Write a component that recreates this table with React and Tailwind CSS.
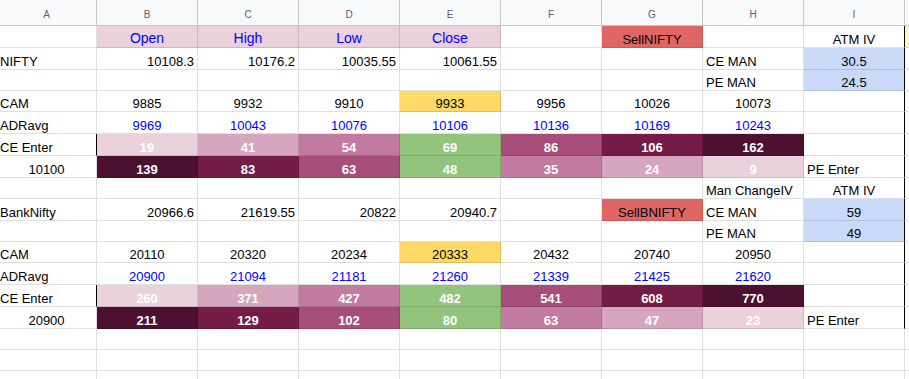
import React from "react";

const COLS = ["A", "B", "C", "D", "E", "F", "G", "H", "I"];

const HEAT = {
  1: "bg-[#ead1dc]",
  2: "bg-[#d5a6bd]",
  3: "bg-[#c27ba0]",
  4: "bg-[#93c47d]",
  5: "bg-[#a64d79]",
  6: "bg-[#741b47]",
  7: "bg-[#4c1130]",
};

// cell shorthand: text, alignment, extra classes
const t = (v, align = "l", extra = "") => ({ v, align, extra });
const blank = () => ({ v: "", align: "l", extra: "" });
const num = (v) => t(v, "r");
const mid = (v, extra = "") => t(v, "c", extra);
const blue = (v) => t(v, "c", "text-[#0000ff]");
const head = (v) => t(v, "c", "bg-[#ead1dc] text-[#0000ff] text-[14px] pb-[1px]");
const heat = (v, lvl) => t(v, "c", `${HEAT[lvl]} text-white font-bold`);
const atm = (v) => t(v, "c", "bg-[#c9daf8]");
const sell = (v) => t(v, "c", "bg-[#e06666]");

const empty = () => Array.from({ length: 9 }, blank);

const rows = [
  { h: "h-[22px]", j: "bg-[#fff2cc]", cells: [blank(), head("Open"), head("High"), head("Low"), head("Close"), blank(), sell("SellNIFTY"), blank(), mid("ATM IV")] },
  { h: "h-[22px]", cells: [t("NIFTY"), num("10108.3"), num("10176.2"), num("10035.55"), num("10061.55"), blank(), blank(), t("CE MAN"), atm("30.5")] },
  { h: "h-[21px]", cells: [blank(), blank(), blank(), blank(), blank(), blank(), blank(), t("PE MAN"), atm("24.5")] },
  { h: "h-[21px]", cells: [t("CAM"), mid("9885"), mid("9932"), mid("9910"), mid("9933", "bg-[#ffd966]"), mid("9956"), mid("10026"), mid("10073"), blank()] },
  { h: "h-[22px]", cells: [t("ADRavg"), blue("9969"), blue("10043"), blue("10076"), blue("10106"), blue("10136"), blue("10169"), blue("10243"), blank()] },
  { h: "h-[22px]", enter: true, cells: [t("CE Enter"), heat("19", 1), heat("41", 2), heat("54", 3), heat("69", 4), heat("86", 5), heat("106", 6), heat("162", 7), blank()] },
  { h: "h-[22px]", cells: [mid("10100"), heat("139", 7), heat("83", 6), heat("63", 5), heat("48", 4), heat("35", 3), heat("24", 2), heat("9", 1), t("PE Enter")] },
  { h: "h-[21px]", cells: [blank(), blank(), blank(), blank(), blank(), blank(), blank(), t("Man ChangeIV"), mid("ATM IV")] },
  { h: "h-[22px]", cells: [t("BankNifty"), num("20966.6"), num("21619.55"), num("20822"), num("20940.7"), blank(), sell("SellBNIFTY"), t("CE MAN"), atm("59")] },
  { h: "h-[21px]", cells: [blank(), blank(), blank(), blank(), blank(), blank(), blank(), t("PE MAN"), atm("49")] },
  { h: "h-[21px]", cells: [t("CAM"), mid("20110"), mid("20320"), mid("20234"), mid("20333", "bg-[#ffd966]"), mid("20432"), mid("20740"), mid("20950"), blank()] },
  { h: "h-[22px]", cells: [t("ADRavg"), blue("20900"), blue("21094"), blue("21181"), blue("21260"), blue("21339"), blue("21425"), blue("21620"), blank()] },
  { h: "h-[22px]", enter: true, cells: [t("CE Enter"), heat("260", 1), heat("371", 2), heat("427", 3), heat("482", 4), heat("541", 5), heat("608", 6), heat("770", 7), blank()] },
  { h: "h-[22px]", cells: [mid("20900"), heat("211", 7), heat("129", 6), heat("102", 5), heat("80", 4), heat("63", 3), heat("47", 2), heat("23", 1), t("PE Enter")] },
  { h: "h-[21px]", tail: true, cells: empty() },
  { h: "h-[21px]", tail: true, cells: empty() },
  { h: "h-[22px]", tail: true, cells: empty() },
];

const ALIGN = { l: "justify-start", r: "justify-end", c: "justify-center" };

// column A is partly scrolled out of view on the left
const colWidth = (i) => (i === 0 ? "w-[100px] -ml-[3px]" : "w-[101px]");

const Cell = ({ cell, col, row }) => {
  let right = "border-r-black/[0.12]";
  if (col === 0 && row.enter) right = "border-r-black";
  if (col === 8 && !row.tail) right = "border-r-black";
  return (
    <div
      className={`${colWidth(col)} shrink-0 flex items-end overflow-hidden whitespace-nowrap px-[3px] border-r border-b border-b-black/[0.12] ${right} ${ALIGN[cell.align]} ${cell.extra}`}
    >
      <span className="leading-[15px]">{cell.v}</span>
    </div>
  );
};

export default function App() {
  return (
    <div
      className="w-[909px] h-[379px] overflow-hidden bg-white text-[13px] text-black"
      style={{ fontFamily: '"Liberation Sans", Arial, sans-serif' }}
    >
      <div className="flex h-[26px] bg-[#f8f9fa] border-b border-[#c4c7c5]">
        {COLS.map((c, i) => (
          <div
            key={c}
            className={`${colWidth(i)} shrink-0 flex items-center justify-center pt-[3px] border-r border-[#c4c7c5] text-[10px] text-[#5f6368]`}
          >
            {c}
          </div>
        ))}
        <div className="flex-1" />
      </div>
      {rows.map((row, r) => (
        <div key={r} className={`flex ${row.h}`}>
          {row.cells.map((cell, c) => (
            <Cell key={c} cell={cell} col={c} row={row} />
          ))}
          <div className={`flex-1 border-b border-b-black/[0.12] ${row.j || ""}`} />
        </div>
      ))}
    </div>
  );
}
